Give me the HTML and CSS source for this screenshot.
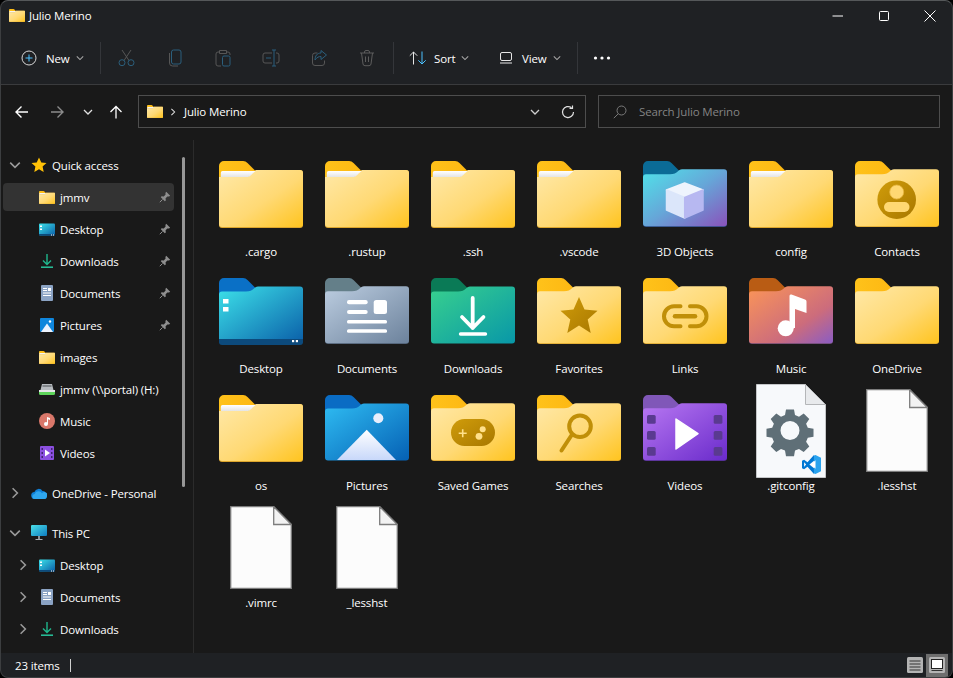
FILE: index.html
```html
<!DOCTYPE html>
<html lang="en">
<head>
    <meta charset="UTF-8">
    <title>Julio Merino</title>
    <link rel="stylesheet" href="styles.css">
</head>
<body>
    <svg class="icon-defs" xmlns="http://www.w3.org/2000/svg">
        <defs>
            <linearGradient id="g-yellow" x1="0" y1="0" x2="1" y2="1"><stop offset="0.05" stop-color="#ffe7a3"/><stop offset="0.55" stop-color="#ffd974"/><stop offset="1" stop-color="#ffc41f"/></linearGradient>
            <linearGradient id="g-tab" x1="0" y1="0" x2="1" y2="0"><stop offset="0" stop-color="#ffc21a"/><stop offset="1" stop-color="#fdb813"/></linearGradient>
            <linearGradient id="g-paper" x1="0" y1="0" x2="0" y2="1"><stop offset="0" stop-color="#ffffff"/><stop offset="1" stop-color="#e4e4e4"/></linearGradient>
            <linearGradient id="g-mark" x1="0" y1="0" x2="1" y2="1"><stop offset="0" stop-color="#d09c0a"/><stop offset="1" stop-color="#a87800"/></linearGradient>
            <linearGradient id="g-3d" x1="0" y1="0" x2="1" y2="1"><stop offset="0" stop-color="#4fe3ea"/><stop offset="0.5" stop-color="#66a6d8"/><stop offset="1" stop-color="#8a52bb"/></linearGradient>
            <linearGradient id="g-desktop" x1="0" y1="0" x2="1" y2="1"><stop offset="0.05" stop-color="#3adbe6"/><stop offset="1" stop-color="#0a5ea8"/></linearGradient>
            <linearGradient id="g-docs" x1="0" y1="0" x2="1" y2="1"><stop offset="0" stop-color="#bccde0"/><stop offset="1" stop-color="#6c829c"/></linearGradient>
            <linearGradient id="g-down" x1="0" y1="0" x2="1" y2="1"><stop offset="0" stop-color="#38d08e"/><stop offset="1" stop-color="#0897a8"/></linearGradient>
            <linearGradient id="g-music" x1="0" y1="0" x2="1" y2="1"><stop offset="0" stop-color="#fb9558"/><stop offset="0.65" stop-color="#cc6c7c"/><stop offset="1" stop-color="#8a5cc4"/></linearGradient>
            <linearGradient id="g-pics" x1="0" y1="0" x2="1" y2="1"><stop offset="0" stop-color="#2fbcf2"/><stop offset="1" stop-color="#0560b4"/></linearGradient>
            <linearGradient id="g-video" x1="0" y1="0" x2="1" y2="1"><stop offset="0" stop-color="#b878f2"/><stop offset="1" stop-color="#6a2bcb"/></linearGradient>
            <linearGradient id="g-snow" x1="0" y1="0" x2="0" y2="1"><stop offset="0" stop-color="#ffffff"/><stop offset="1" stop-color="#c8d8fa"/></linearGradient>
            <linearGradient id="g-pc" x1="0" y1="0" x2="1" y2="1"><stop offset="0" stop-color="#4be0e8"/><stop offset="1" stop-color="#0e7cc0"/></linearGradient>
            <path id="f-tab" d="M0 5a5 5 0 0 1 5-5h19a6 6 0 0 1 4.500 2l8 8v12H0z"/>
            <path id="f-body" d="M0 17a3 3 0 0 1 3-3h24c4 0 6-1 8-3 1-1 2-2 4-2h42a3 3 0 0 1 3 3v51a3 3 0 0 1-3 3H3a3 3 0 0 1-3-3z"/>
        </defs>

        <symbol id="f-yellow" viewBox="0 0 84 67">
            <use href="#f-tab" fill="url(#g-tab)"/>
            <path d="M0 17h29l8-8h44a3 3 0 0 1 3 3v52a3 3 0 0 1-3 3H3a3 3 0 0 1-3-3z" fill="#dca52c"/>
            <path d="M0 16h29l8-7h44a3 3 0 0 1 3 3v51a3 3 0 0 1-3 3H3a3 3 0 0 1-3-3z" fill="url(#g-yellow)"/>
            <path d="M3.500 10h33.200l-3 2.500c-1.500 1.500-3 3.500-5 3.500H1.800v-4.300a1.700 1.700 0 0 1 1.700-1.700z" fill="url(#g-paper)"/>
        </symbol>
        <symbol id="f-empty" viewBox="0 0 84 67">
            <use href="#f-tab" fill="url(#g-tab)"/>
            <use href="#f-body" fill="#dca52c"/>
            <use href="#f-body" y="-0.800" fill="url(#g-yellow)"/>
        </symbol>
        <symbol id="f-contacts" viewBox="0 0 84 67">
            <use href="#f-empty"/>
            <circle cx="41.700" cy="38.700" r="19.300" fill="url(#g-mark)"/>
            <circle cx="41.700" cy="31" r="7" fill="#ffd873" stroke="#e8b840" stroke-width="0.800"/>
            <rect x="29" y="41" width="25.500" height="10" rx="5" fill="#ffd873"/>
        </symbol>
        <symbol id="f-3d" viewBox="0 0 84 67">
            <use href="#f-tab" fill="#0b6b96"/>
            <use href="#f-body" fill="#2a4a80"/>
            <use href="#f-body" y="-0.800" fill="url(#g-3d)"/>
            <path d="M41.700 22 60 29 41.700 36.500 23.500 29z" fill="#eef4fd" stroke="#eef4fd" stroke-width="1.500" stroke-linejoin="round"/>
            <path d="M23.500 29 41.700 36.500V57L23.500 49z" fill="#dbe6fa" stroke="#dbe6fa" stroke-width="1.500" stroke-linejoin="round"/>
            <path d="M60 29 41.700 36.500V57L60 49z" fill="#b7b8f1" stroke="#b7b8f1" stroke-width="1.500" stroke-linejoin="round"/>
        </symbol>
        <symbol id="f-desktop" viewBox="0 0 84 67">
            <use href="#f-tab" fill="#0a70c6"/>
            <use href="#f-body" y="-0.500" fill="url(#g-desktop)"/>
            <path d="M0 61h84v3a3 3 0 0 1-3 3H3a3 3 0 0 1-3-3z" fill="#0c4a7c"/>
            <rect x="4" y="21" width="5.500" height="4.500" fill="#fff"/>
            <rect x="4" y="29" width="5.500" height="4.500" fill="#fff"/>
            <rect x="73" y="62" width="2.200" height="2.200" fill="#fff"/>
            <rect x="76.800" y="62" width="2.200" height="2.200" fill="#fff"/>
        </symbol>
        <symbol id="f-docs" viewBox="0 0 84 67">
            <use href="#f-tab" fill="#647f89"/>
            <use href="#f-body" fill="#4c5c70"/>
            <use href="#f-body" y="-0.800" fill="url(#g-docs)"/>
            <rect x="22" y="22" width="20.700" height="4.300" rx="2" fill="#fff"/>
            <rect x="22" y="32" width="20.700" height="4" rx="2" fill="#fff"/>
            <rect x="48.700" y="22" width="13.300" height="14" rx="2.500" fill="#fff"/>
            <rect x="22" y="42" width="40" height="3.400" rx="1.500" fill="#fff"/>
            <rect x="22" y="51.300" width="40" height="3.400" rx="1.500" fill="#fff"/>
        </symbol>
        <symbol id="f-down" viewBox="0 0 84 67">
            <use href="#f-tab" fill="#0a7a56"/>
            <use href="#f-body" y="-0.500" fill="url(#g-down)"/>
            <path d="M41.700 20v30M31 39l10.700 11L52.500 39" fill="none" stroke="#fff" stroke-width="3.800" stroke-linecap="round" stroke-linejoin="round"/>
            <path d="M29.500 56h25" stroke="#fff" stroke-width="3.400" stroke-linecap="round"/>
        </symbol>
        <symbol id="f-star" viewBox="0 0 84 67">
            <use href="#f-empty"/>
            <path d="M42 19l5.500 12.500 13 1.200-9.800 8.800 3 13.500L42 47.500 30.300 55l3-13.500-9.800-8.800 13-1.200z" fill="url(#g-mark)"/>
        </symbol>
        <symbol id="f-links" viewBox="0 0 84 67">
            <use href="#f-empty"/>
            <path d="M37.500 28.300H31a10 10 0 0 0 0 20h6.500M47 28.300h6.500a10 10 0 0 1 0 20H47" fill="none" stroke="#c08f08" stroke-width="4" stroke-linecap="round"/>
            <path d="M32 38.300h20" stroke="#c08f08" stroke-width="4.500" stroke-linecap="round"/>
        </symbol>
        <symbol id="f-music" viewBox="0 0 84 67">
            <use href="#f-tab" fill="#b95c14"/>
            <use href="#f-body" fill="#6c4a70"/>
            <use href="#f-body" y="-0.800" fill="url(#g-music)"/>
            <circle cx="36.700" cy="50.300" r="8" fill="#fff"/>
            <path d="M40.500 50V18a1.500 1.500 0 0 1 2-1.400l13.500 4.800a2 2 0 0 1 1.500 2V35l-11.500-4v19z" fill="#fff"/>
        </symbol>
        <symbol id="f-pics" viewBox="0 0 84 67">
            <use href="#f-tab" fill="#0a6cc4"/>
            <use href="#f-body" y="-0.500" fill="url(#g-pics)"/>
            <circle cx="53.300" cy="23.300" r="5" fill="#e8eefc"/>
            <path d="M41.700 34.700 71 65H12z" fill="url(#g-snow)"/>
        </symbol>
        <symbol id="f-games" viewBox="0 0 84 67">
            <use href="#f-empty"/>
            <rect x="20" y="24" width="44" height="27" rx="13.500" fill="url(#g-mark)"/>
            <path d="M27.700 38.300h8M31.700 34.300v8" stroke="#ffe08a" stroke-width="1.600"/>
            <circle cx="51.700" cy="34.300" r="3" fill="#ffe08a"/>
            <circle cx="48" cy="41.300" r="3.400" fill="#ffe08a"/>
        </symbol>
        <symbol id="f-search" viewBox="0 0 84 67">
            <use href="#f-empty"/>
            <circle cx="43" cy="31.300" r="10.800" fill="none" stroke="#c08f08" stroke-width="4"/>
            <path d="M35 39.500 24.500 55.500" stroke="#c08f08" stroke-width="4" stroke-linecap="round"/>
        </symbol>
        <symbol id="f-video" viewBox="0 0 84 67">
            <use href="#f-tab" fill="#8057b8"/>
            <use href="#f-body" fill="#4e2f88"/>
            <use href="#f-body" y="-0.800" fill="url(#g-video)"/>
            <g fill="#5a3a90">
                <rect x="4" y="20" width="8.700" height="8.700" rx="1.500"/>
                <rect x="4" y="36" width="8.700" height="8.700" rx="1.500"/>
                <rect x="4" y="52" width="8.700" height="8.700" rx="1.500"/>
                <rect x="70.700" y="20" width="8.700" height="8.700" rx="1.500"/>
                <rect x="70.700" y="36" width="8.700" height="8.700" rx="1.500"/>
                <rect x="70.700" y="52" width="8.700" height="8.700" rx="1.500"/>
            </g>
            <path d="M33 24 55 38.700 33 54z" fill="#fff" stroke="#fff" stroke-width="1.500" stroke-linejoin="round"/>
        </symbol>
        <symbol id="file-blank" viewBox="0 0 62 83">
            <path d="M.7.700h43L61.300 18.500v63.800H.7z" fill="#fcfcfc" stroke="#7c7c7c" stroke-width="1.300"/>
            <path d="M43.700.700v17.800h17.600z" fill="#f2f2f2" stroke="#7c7c7c" stroke-width="1.300"/>
        </symbol>
        <symbol id="file-code" viewBox="0 0 70 94">
            <path d="M.5.500h49l20 20v73H.5z" fill="#f7f9fb" stroke="#c4c6c8"/>
            <path d="M49.500.500v20h20z" fill="#e8eaec" stroke="#b4b6b8"/>
            <path fill="#5f6f77" fill-rule="evenodd" d="M30 25.500h8l1 5.500 4 1.700 4.700-3.200 5.600 5.600-3.200 4.700 1.700 4 5.700 1v8l-5.700 1-1.700 4 3.200 4.700-5.600 5.600-4.700-3.200-4 1.700-1 5.700h-8l-1-5.700-4-1.700-4.700 3.200-5.600-5.600 3.200-4.700-1.700-4-5.700-1v-8l5.700-1 1.700-4-3.200-4.700 5.600-5.600 4.700 3.200 4-1.700zM34 37a9.500 9.500 0 1 0 0 19 9.500 9.500 0 0 0 0-19z"/>
            <svg x="46" y="71" width="19" height="19" viewBox="0 0 100 100">
                <path fill="#0078d4" d="M0 30l11-5 18 13 34-38v30L39 50l24 20v30L29 62 11 75 0 70zM11 38v24l11-12z"/>
                <path fill="#2aa3ee" d="M71 0l29 14v72l-29 14-8-3V3z"/>
                <path fill="#fff" d="M71 27v46L47 50z"/>
            </svg>
        </symbol>

        <symbol id="s-desktop" viewBox="0 0 16 12">
            <path d="M1 0h14a1 1 0 0 1 1 1v10a1 1 0 0 1-1 1H1a1 1 0 0 1-1-1V1a1 1 0 0 1 1-1z" fill="url(#g-desktop)"/>
            <path d="M0 10.500h16V11a1 1 0 0 1-1 1H1a1 1 0 0 1-1-1z" fill="#0c4a7c"/>
            <path d="M1 2h2v1.500H1zM1 5h2v1.500H1zM12 11h1v1h-1zM14 11h1v1h-1z" fill="#fff"/>
        </symbol>
        <symbol id="s-down" viewBox="0 0 16 16">
            <path d="M8 1v10M4 7.500 8 11.500 12 7.500" fill="none" stroke="#1fb68c" stroke-width="1.400"/>
            <path d="M2 14.200h12" stroke="#28c49c" stroke-width="1.500"/>
        </symbol>
        <symbol id="s-docs" viewBox="0 0 16 16">
            <path d="M2 1a1 1 0 0 1 1-1h10a1 1 0 0 1 1 1v14a1 1 0 0 1-1 1H3a1 1 0 0 1-1-1z" fill="#8ba3c4"/>
            <path d="M4 3.500h4M4 5.500h4M4 8h8M4 10.500h8" stroke="#fff"/>
            <rect x="9" y="3" width="3" height="3" fill="#fff"/>
        </symbol>
        <symbol id="s-pics" viewBox="0 0 16 16">
            <rect x="1" y="1" width="14" height="14" rx="1" fill="#0f86dc"/>
            <circle cx="11" cy="4.500" r="1.200" fill="#fff"/>
            <path d="M8 6.500 14 15H2z" fill="#eef3fd"/>
        </symbol>
        <symbol id="s-drive" viewBox="0 0 16 16">
            <path d="M3 3h10l1.500 6h-13z" fill="#b8bcc0"/>
            <path d="M3.500 5h9" stroke="#4a4e52"/>
            <rect x="0" y="9" width="16" height="5" rx="1.500" fill="#5dd45a"/>
            <rect x="0" y="9" width="16" height="2" fill="#e4e6e8"/>
        </symbol>
        <symbol id="s-music" viewBox="0 0 16 16">
            <circle cx="8" cy="8" r="8" fill="#d9776a"/>
            <circle cx="7" cy="11" r="2" fill="#fff"/>
            <path d="M8 11V4l3 1v2l-2-.7V11z" fill="#fff"/>
        </symbol>
        <symbol id="s-video" viewBox="0 0 16 16">
            <rect x="1" y="1" width="14" height="14" rx="1" fill="#8b4fe0"/>
            <path d="M2.500 3h1.500v2H2.500zM2.500 7h1.500v2H2.500zM2.500 11h1.500v2H2.500zM12 3h1.500v2H12zM12 7h1.500v2H12zM12 11h1.500v2H12z" fill="#41246f"/>
            <path d="M6 4.500 11 8 6 11.500z" fill="#fff"/>
        </symbol>
        <symbol id="s-star" viewBox="0 0 16 16">
            <path d="M8 .500l2.300 5 5.200.6-3.900 3.500 1.100 5.400L8 12.300 3.300 15l1.100-5.400L.5 6.100l5.200-.6z" fill="#ffc107"/>
        </symbol>
        <symbol id="s-cloud" viewBox="0 0 16 11">
            <path d="M4 11a3.500 3.500 0 0 1-.6-7A4.500 4.500 0 0 1 11.500 3a3.800 3.800 0 0 1 3.900 4.200A2.400 2.400 0 0 1 13.500 11z" fill="#0f7fd6"/>
            <path d="M4 11a2.500 2.500 0 0 1-.3-5A4 4 0 0 1 11 5.200 3 3 0 0 1 15.700 9a2.400 2.400 0 0 1-2.200 2z" fill="#2fa6ee"/>
        </symbol>
        <symbol id="s-pc" viewBox="0 0 16 16">
            <rect x="0" y="0" width="16" height="11" rx="1" fill="url(#g-pc)"/>
            <path d="M7 11h2v3H7z" fill="#8a9298"/>
            <path d="M4.500 14.500h7" stroke="#a8aeb2"/>
        </symbol>
        <symbol id="s-chev-down" viewBox="0 0 10 10">
            <path d="M1 3l4 4 4-4" fill="none" stroke="currentColor" stroke-width="1.300"/>
        </symbol>
        <symbol id="s-chev-right" viewBox="0 0 10 10">
            <path d="M3 1l4 4-4 4" fill="none" stroke="currentColor" stroke-width="1.300"/>
        </symbol>
        <symbol id="s-pin" viewBox="0 0 12 12">
            <path d="M7.200.800 11.200 4.800 10 5.600 8.400 5.400 6.600 7.200 6.800 9.400 5.800 10.200 1.800 6.200 2.600 5.200 4.800 5.400 6.600 3.600 6.400 2z" fill="#8e8e8e"/>
            <path d="M3.500 8.500.8 11.200" stroke="#8e8e8e"/>
        </symbol>
    </svg>

    <div class="window">
        <header class="titlebar">
            <svg class="folder-small"><use href="#f-yellow"/></svg>
            <span class="title-text">Julio Merino</span>
            <div class="win-controls">
                <svg class="win-btn" viewBox="0 0 12 12"><path d="M.500 6h10.500" stroke="#fff"/></svg>
                <svg class="win-btn" viewBox="0 0 12 12"><rect x="1.500" y="1.500" width="9" height="9" rx="1" fill="none" stroke="#fff"/></svg>
                <svg class="win-btn" viewBox="0 0 12 12"><path d="M.500 .500l11 11M11.500 .500l-11 11" stroke="#fff"/></svg>
            </div>
        </header>

        <div class="toolbar">
            <div class="tool tool-new">
                <svg class="tool-icon" viewBox="0 0 16 16"><circle cx="8" cy="8" r="7" fill="none" stroke="#d6d6d6"/><path d="M8 4.500v7M4.500 8h7" stroke="#4cc2ff"/></svg>
                <span>New</span>
                <svg class="tool-chev"><use href="#s-chev-down"/></svg>
            </div>
            <div class="tool-sep"></div>
            <div class="tool-group">
                <div class="tool-square"><svg class="square-icon" viewBox="0 0 20 20"><path d="M7 12.500 14 2M12 12.500 5 2" stroke="#565656" fill="none"/><circle cx="5" cy="14.700" r="3" fill="none" stroke="#2b5f7c"/><circle cx="14" cy="14.700" r="3" fill="none" stroke="#2b5f7c"/></svg></div>
                <div class="tool-square"><svg class="square-icon" viewBox="0 0 20 20"><rect x="6.500" y="2" width="9.500" height="14" rx="2" fill="none" stroke="#2b5f7c"/><path d="M4.500 5v10a3 3 0 0 0 3 3H13" fill="none" stroke="#565656"/></svg></div>
                <div class="tool-square"><svg class="square-icon" viewBox="0 0 20 20"><path d="M6.500 4H5a2 2 0 0 0-2 2v10a2 2 0 0 0 2 2h3M13.500 4H15a2 2 0 0 1 2 2v1M6.500 2.500h7v3h-7z" fill="none" stroke="#565656"/><rect x="9.500" y="8" width="7.500" height="10" rx="1.500" fill="none" stroke="#2b5f7c"/></svg></div>
                <div class="tool-square"><svg class="square-icon" viewBox="0 0 20 20"><path d="M11 5H4a2 2 0 0 0-2 2v6a2 2 0 0 0 2 2h7M15 5h1a2 2 0 0 1 2 2v6a2 2 0 0 1-2 2h-1" fill="none" stroke="#565656"/><path d="M13 2v16M11 2h4M11 18h4M5 10h5" fill="none" stroke="#2b5f7c"/></svg></div>
                <div class="tool-square"><svg class="square-icon" viewBox="0 0 20 20"><path d="M8.500 5H6a2.500 2.500 0 0 0-2.500 2.500V15A2.500 2.500 0 0 0 6 17.500h7a2.500 2.500 0 0 0 2.500-2.500v-2.500" fill="none" stroke="#565656"/><path d="M17.500 7 12 2.500V5c-4 0-6 3-6 7 2-3 4-3.500 6-3.500v3z" fill="none" stroke="#2b5f7c" stroke-linejoin="round"/></svg></div>
                <div class="tool-square"><svg class="square-icon" viewBox="0 0 20 20"><path d="M3 5h14M7.500 5V4a1.500 1.500 0 0 1 1.500-1.500h2A1.500 1.500 0 0 1 12.500 4v1M4.500 5 6 16a2 2 0 0 0 2 1.700h4a2 2 0 0 0 2-1.700l1.500-11M8.500 8.500v5.500M11.500 8.500v5.500" fill="none" stroke="#5c5c5c"/></svg></div>
            </div>
            <div class="tool-sep"></div>
            <div class="tool tool-sort">
                <svg class="sort-icon" viewBox="0 0 18 14"><path d="M4.500 13.500V1M.8 4.700 4.500 1l3.700 3.700" fill="none" stroke="#e6e6e6"/><path d="M13 .5V13M9.300 9.300 13 13l3.700-3.700" fill="none" stroke="#4cc2ff"/></svg>
                <span>Sort</span>
                <svg class="tool-chev"><use href="#s-chev-down"/></svg>
            </div>
            <div class="tool tool-view">
                <svg class="view-icon" viewBox="0 0 14 12"><rect x="1.500" y=".500" width="11" height="8" rx="1.500" fill="none" stroke="#e6e6e6"/><path d="M1 11h12" stroke="#e6e6e6"/></svg>
                <span>View</span>
                <svg class="tool-chev"><use href="#s-chev-down"/></svg>
            </div>
            <div class="tool-sep"></div>
            <div class="tool-more">
                <svg class="more-icon" viewBox="0 0 18 4"><circle cx="2.500" cy="2" r="1.600" fill="#fff"/><circle cx="9" cy="2" r="1.600" fill="#fff"/><circle cx="15.500" cy="2" r="1.600" fill="#fff"/></svg>
            </div>
        </div>

        <div class="addressbar">
            <div class="nav-btn nav-back"><svg class="nav-icon" viewBox="0 0 16 16"><path d="M14 8H2.500M7.500 2.500 2 8l5.500 5.500" fill="none" stroke="#fff" stroke-width="1.400"/></svg></div>
            <div class="nav-btn nav-forward"><svg class="nav-icon" viewBox="0 0 16 16"><path d="M2 8h11.500M8.500 2.500 14 8l-5.500 5.500" fill="none" stroke="#8c8c8c" stroke-width="1.400"/></svg></div>
            <div class="nav-btn nav-recent"><svg class="nav-chev"><use href="#s-chev-down"/></svg></div>
            <div class="nav-btn nav-up"><svg class="nav-icon" viewBox="0 0 16 16"><path d="M8 14.500V2.500M2.500 8 8 2.500 13.500 8" fill="none" stroke="#fff" stroke-width="1.300"/></svg></div>
            <div class="address-box">
                <svg class="folder-small"><use href="#f-yellow"/></svg>
                <svg class="crumb-chev"><use href="#s-chev-right"/></svg>
                <span class="crumb-text">Julio Merino</span>
                <svg class="address-chev"><use href="#s-chev-down"/></svg>
                <svg class="refresh-icon" viewBox="0 0 14 14"><path d="M12.500 7A5.500 5.500 0 1 1 10.500 2.800M11.500 .5v3h-3" fill="none" stroke="#e0e0e0" stroke-width="1.200"/></svg>
            </div>
            <div class="search-box">
                <svg class="search-icon" viewBox="0 0 14 14"><circle cx="8.500" cy="5.500" r="4.500" fill="none" stroke="#7a7a7a"/><path d="M5.200 8.800.8 13.200" stroke="#7a7a7a"/></svg>
                <span>Search Julio Merino</span>
            </div>
        </div>

        <div class="content">
            <aside class="sidebar">
                <nav class="nav-tree">
                    <div class="nav-group">
                        <div class="nav-row"><svg class="row-chev"><use href="#s-chev-down"/></svg><svg class="row-icon"><use href="#s-star"/></svg><span>Quick access</span></div>
                        <div class="nav-row child selected"><span class="row-chev"></span><svg class="row-icon icon-folder"><use href="#f-yellow"/></svg><span>jmmv</span><svg class="row-pin"><use href="#s-pin"/></svg></div>
                        <div class="nav-row child"><span class="row-chev"></span><svg class="row-icon icon-folder"><use href="#s-desktop"/></svg><span>Desktop</span><svg class="row-pin"><use href="#s-pin"/></svg></div>
                        <div class="nav-row child"><span class="row-chev"></span><svg class="row-icon"><use href="#s-down"/></svg><span>Downloads</span><svg class="row-pin"><use href="#s-pin"/></svg></div>
                        <div class="nav-row child"><span class="row-chev"></span><svg class="row-icon"><use href="#s-docs"/></svg><span>Documents</span><svg class="row-pin"><use href="#s-pin"/></svg></div>
                        <div class="nav-row child"><span class="row-chev"></span><svg class="row-icon"><use href="#s-pics"/></svg><span>Pictures</span><svg class="row-pin"><use href="#s-pin"/></svg></div>
                        <div class="nav-row child"><span class="row-chev"></span><svg class="row-icon icon-folder"><use href="#f-yellow"/></svg><span>images</span></div>
                        <div class="nav-row child"><span class="row-chev"></span><svg class="row-icon"><use href="#s-drive"/></svg><span>jmmv (\\portal) (H:)</span></div>
                        <div class="nav-row child"><span class="row-chev"></span><svg class="row-icon"><use href="#s-music"/></svg><span>Music</span></div>
                        <div class="nav-row child"><span class="row-chev"></span><svg class="row-icon"><use href="#s-video"/></svg><span>Videos</span></div>
                    </div>
                    <div class="nav-group">
                        <div class="nav-row"><svg class="row-chev"><use href="#s-chev-right"/></svg><svg class="row-icon icon-cloud"><use href="#s-cloud"/></svg><span>OneDrive - Personal</span></div>
                    </div>
                    <div class="nav-group">
                        <div class="nav-row"><svg class="row-chev"><use href="#s-chev-down"/></svg><svg class="row-icon"><use href="#s-pc"/></svg><span>This PC</span></div>
                        <div class="nav-row child"><svg class="row-chev"><use href="#s-chev-right"/></svg><svg class="row-icon icon-folder"><use href="#s-desktop"/></svg><span>Desktop</span></div>
                        <div class="nav-row child"><svg class="row-chev"><use href="#s-chev-right"/></svg><svg class="row-icon"><use href="#s-docs"/></svg><span>Documents</span></div>
                        <div class="nav-row child"><svg class="row-chev"><use href="#s-chev-right"/></svg><svg class="row-icon"><use href="#s-down"/></svg><span>Downloads</span></div>
                    </div>
                </nav>
                <div class="scroll-thumb"></div>
            </aside>

            <main class="file-grid">
                <div class="tile"><div class="tile-icon"><svg class="folder-big"><use href="#f-yellow"/></svg></div><span>.cargo</span></div>
                <div class="tile"><div class="tile-icon"><svg class="folder-big"><use href="#f-yellow"/></svg></div><span>.rustup</span></div>
                <div class="tile"><div class="tile-icon"><svg class="folder-big"><use href="#f-yellow"/></svg></div><span>.ssh</span></div>
                <div class="tile"><div class="tile-icon"><svg class="folder-big"><use href="#f-yellow"/></svg></div><span>.vscode</span></div>
                <div class="tile"><div class="tile-icon"><svg class="folder-big"><use href="#f-3d"/></svg></div><span>3D Objects</span></div>
                <div class="tile"><div class="tile-icon"><svg class="folder-big"><use href="#f-yellow"/></svg></div><span>config</span></div>
                <div class="tile"><div class="tile-icon"><svg class="folder-big"><use href="#f-contacts"/></svg></div><span>Contacts</span></div>

                <div class="tile"><div class="tile-icon"><svg class="folder-big"><use href="#f-desktop"/></svg></div><span>Desktop</span></div>
                <div class="tile"><div class="tile-icon"><svg class="folder-big"><use href="#f-docs"/></svg></div><span>Documents</span></div>
                <div class="tile"><div class="tile-icon"><svg class="folder-big"><use href="#f-down"/></svg></div><span>Downloads</span></div>
                <div class="tile"><div class="tile-icon"><svg class="folder-big"><use href="#f-star"/></svg></div><span>Favorites</span></div>
                <div class="tile"><div class="tile-icon"><svg class="folder-big"><use href="#f-links"/></svg></div><span>Links</span></div>
                <div class="tile"><div class="tile-icon"><svg class="folder-big"><use href="#f-music"/></svg></div><span>Music</span></div>
                <div class="tile"><div class="tile-icon"><svg class="folder-big"><use href="#f-empty"/></svg></div><span>OneDrive</span></div>

                <div class="tile"><div class="tile-icon"><svg class="folder-big"><use href="#f-yellow"/></svg></div><span>os</span></div>
                <div class="tile"><div class="tile-icon"><svg class="folder-big"><use href="#f-pics"/></svg></div><span>Pictures</span></div>
                <div class="tile"><div class="tile-icon"><svg class="folder-big"><use href="#f-games"/></svg></div><span>Saved Games</span></div>
                <div class="tile"><div class="tile-icon"><svg class="folder-big"><use href="#f-search"/></svg></div><span>Searches</span></div>
                <div class="tile"><div class="tile-icon"><svg class="folder-big"><use href="#f-video"/></svg></div><span>Videos</span></div>
                <div class="tile"><div class="tile-icon"><svg class="file-big"><use href="#file-code"/></svg></div><span>.gitconfig</span></div>
                <div class="tile"><div class="tile-icon"><svg class="file-plain"><use href="#file-blank"/></svg></div><span>.lesshst</span></div>

                <div class="tile"><div class="tile-icon"><svg class="file-plain"><use href="#file-blank"/></svg></div><span>.vimrc</span></div>
                <div class="tile"><div class="tile-icon"><svg class="file-plain"><use href="#file-blank"/></svg></div><span>_lesshst</span></div>
            </main>
        </div>

        <footer class="statusbar">
            <span class="status-count">23 items</span>
            <div class="status-views">
                <svg class="view-list" viewBox="0 0 16 16"><rect width="16" height="16" rx="1.500" fill="#b4b4b4"/><path d="M2.500 4h11M2.500 7h11M2.500 10h11M2.500 13h11" stroke="#333"/></svg>
                <div class="view-active">
                    <svg class="view-tile" viewBox="0 0 16 16"><rect width="16" height="16" rx="1.500" fill="#b4b4b4"/><rect x="2.500" y="2.500" width="11" height="9" fill="#fff" stroke="#222"/><path d="M2.500 13.500h11" stroke="#333"/></svg>
                </div>
            </div>
        </footer>
    </div>
</body>
</html>
```

FILE: styles.css
```css
* {
    box-sizing: border-box;
}

html, body {
    margin: 0;
    background: #000;
}

body {
    font-family: "Open Sans", "Noto Sans", sans-serif;
    font-size: 11.5px;
    letter-spacing: -0.15px;
    color: #fff;
    overflow: hidden;
}

.icon-defs {
    display: block;
    width: 0;
    height: 0;
}

.window {
    width: 953px;
    height: 678px;
    display: flex;
    flex-direction: column;
    background: #1f2124;
    border: 1px solid #3c3e40;
    border-top-color: #55585a;
    border-radius: 8px;
    overflow: hidden;
}

/* title bar */
.titlebar {
    height: 31px;
    flex: none;
    display: flex;
    align-items: center;
    padding: 0 0 2px 8px;
}

.folder-small {
    width: 16px;
    height: 13px;
    flex: none;
}

.title-text {
    margin-left: 4px;
}

.win-controls {
    margin-left: auto;
    display: flex;
    margin-right: 16px;
    gap: 34px;
}

.win-btn {
    width: 12px;
    height: 12px;
}

/* toolbar */
.toolbar {
    height: 53px;
    flex: none;
    display: flex;
    align-items: center;
    padding-left: 12px;
    border-bottom: 1px solid #3a3b3d;
}

.tool {
    display: flex;
    align-items: center;
    height: 32px;
}

.tool-new {
    width: 87px;
    padding-left: 8px;
}

.tool-sort {
    width: 98px;
    padding-left: 15px;
}

.tool-view {
    width: 85px;
    padding-left: 7px;
}

.tool-icon {
    width: 16px;
    height: 16px;
    margin-right: 9px;
}

.sort-icon {
    width: 18px;
    height: 14px;
    margin-right: 7px;
}

.view-icon {
    width: 14px;
    height: 12px;
    margin-right: 9px;
}

.tool-chev {
    width: 8px;
    height: 8px;
    margin-left: 6px;
    color: #a8a8a8;
}

.tool-sep {
    width: 1px;
    height: 32px;
    background: #34363a;
    flex: none;
}

.tool-group {
    display: flex;
    margin: 0 2px;
}

.tool-square {
    width: 48px;
    display: flex;
    justify-content: center;
}

.square-icon {
    width: 20px;
    height: 20px;
}

.tool-more {
    padding-left: 15px;
    display: flex;
}

.more-icon {
    width: 18px;
    height: 4px;
}

/* address row */
.addressbar {
    height: 55px;
    flex: none;
    display: flex;
    align-items: center;
    padding: 0 0 2px 3px;
    background: #191919;
}

.nav-btn {
    display: flex;
    justify-content: center;
}

.nav-back,
.nav-forward {
    width: 35px;
}

.nav-recent {
    width: 27px;
}

.nav-up {
    width: 30px;
    margin-right: 7px;
}

.nav-icon {
    width: 16px;
    height: 16px;
}

.nav-chev {
    width: 10px;
    height: 10px;
    color: #e0e0e0;
}

.address-box,
.search-box {
    height: 33px;
    display: flex;
    align-items: center;
    border: 1px solid #4d4d4d;
}

.address-box {
    width: 448px;
    padding-left: 8px;
}

.crumb-chev {
    width: 8px;
    height: 8px;
    margin-left: 6px;
    color: #e0e0e0;
}

.crumb-text {
    margin-left: 7px;
}

.address-chev {
    width: 10px;
    height: 10px;
    margin-left: auto;
    color: #cfcfcf;
}

.refresh-icon {
    width: 14px;
    height: 14px;
    margin-left: 21px;
    margin-right: 10px;
}

.search-box {
    width: 342px;
    margin-left: 12px;
    padding-left: 14px;
    color: #848484;
}

.search-icon {
    width: 14px;
    height: 14px;
    margin-right: 12px;
}

/* sidebar and files */
.content {
    flex: 1;
    display: flex;
    min-height: 0;
    background: #191919;
}

.sidebar {
    width: 193px;
    flex: none;
    display: flex;
    overflow: hidden;
    padding-top: 11px;
    border-right: 1px solid #2b2b2b;
}

.nav-tree {
    width: 173px;
    flex: none;
}

.nav-group {
    display: flex;
    flex-direction: column;
    gap: 4px;
}

.nav-group + .nav-group {
    margin-top: 12px;
}

.nav-row {
    height: 28px;
    flex: none;
    margin-left: 2px;
    padding-left: 6px;
    display: flex;
    align-items: center;
    border-radius: 4px;
}

.nav-row.child {
    padding-left: 14px;
}

.nav-row.selected {
    background: #333333;
}

.row-chev {
    width: 12px;
    height: 12px;
    flex: none;
    margin-right: 10px;
    color: #9a9a9a;
}

.row-icon {
    width: 16px;
    height: 16px;
    flex: none;
    margin-right: 5px;
}

.icon-folder {
    height: 13px;
}

.icon-cloud {
    height: 11px;
}

.row-pin {
    width: 12px;
    height: 12px;
    margin-left: auto;
    margin-right: 3px;
}

.scroll-thumb {
    width: 3px;
    height: 330px;
    margin: 6px 0 0 8px;
    background: #979797;
    border-radius: 2px;
    flex: none;
}

.file-grid {
    flex: 1;
    display: grid;
    grid-template-columns: repeat(7, 106px);
    grid-auto-rows: 117px;
    align-content: start;
    padding: 6px 0 0 14px;
    overflow: hidden;
}

.tile {
    display: flex;
    flex-direction: column;
    align-items: center;
}

.tile span {
    line-height: 20px;
}

.tile-icon {
    height: 96px;
    display: flex;
    align-items: center;
}

.folder-big {
    width: 84px;
    height: 67px;
}

.file-big {
    width: 70px;
    height: 94px;
    margin-top: 5px;
}

.file-plain {
    width: 62px;
    height: 83px;
    margin-top: 5px;
}

/* status bar */
.statusbar {
    height: 24px;
    flex: none;
    display: flex;
    align-items: center;
    padding-left: 14px;
}

.status-count {
    padding-right: 10px;
    border-right: 1px solid #d0d0d0;
    line-height: 13px;
}

.status-views {
    margin-left: auto;
    margin-right: 4px;
    display: flex;
    align-items: center;
    gap: 3px;
}

.view-list {
    width: 16px;
    height: 16px;
}

.view-active {
    width: 22px;
    height: 23px;
    display: flex;
    align-items: center;
    justify-content: center;
    background: #6e6e6e;
}

.view-tile {
    width: 16px;
    height: 16px;
}
```
